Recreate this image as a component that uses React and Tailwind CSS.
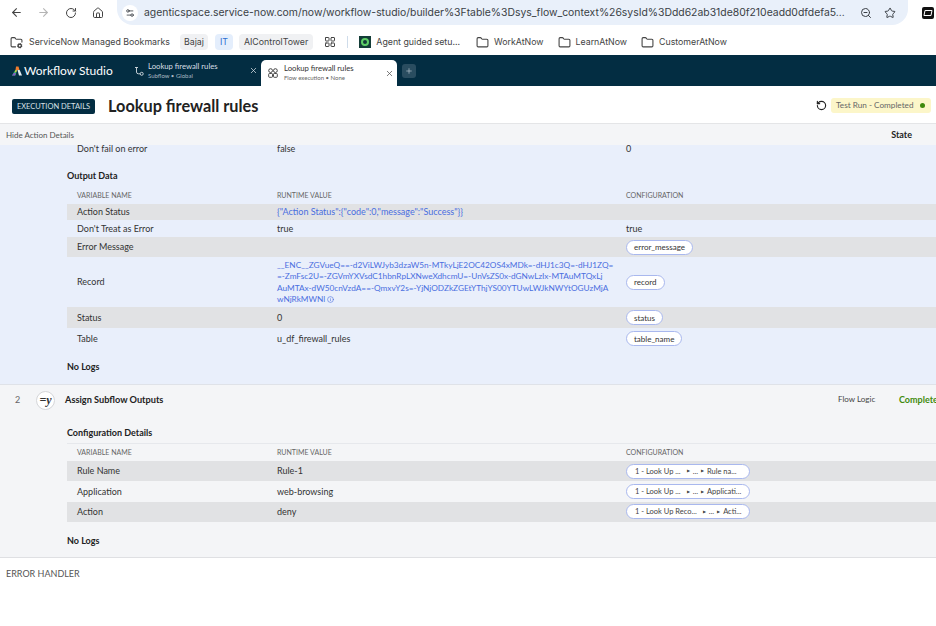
import React from 'react';
import { ArrowLeft, ArrowRight, RotateCw, Home, ZoomOut, Star, FolderCog, LayoutGrid, Folder, X, Plus, Settings2, Info } from 'lucide-react';

const BOOKMARK_FOLDERS = [
  { name: 'WorkAtNow', ml: 'ml-[16px]' },
  { name: 'LearnAtNow', ml: 'ml-[14px]' },
  { name: 'CustomerAtNow', ml: 'ml-[14px]' },
];

const OUTPUT_ROWS = [
  { name: 'Action Status', h: 'h-[16px]', value: '{"Action Status":{"code":0,"message":"Success"}}', link: true, shaded: true },
  { name: "Don't Treat as Error", h: 'h-[17px]', value: 'true', text: 'true' },
  { name: 'Error Message', h: 'h-[20px]', pill: 'error_message', shaded: true },
  { name: 'Record', h: 'h-[50px]', record: true, pill: 'record' },
  { name: 'Status', h: 'h-[21px]', value: '0', pill: 'status', shaded: true },
  { name: 'Table', h: 'h-[21px]', value: 'u_df_firewall_rules', pill: 'table_name' },
];

const RECORD_LINES = [
  '__ENC__ZGVueQ==-d2ViLWJyb3dzaW5n-MTkyLjE2OC42OS4xMDk=-dHJ1c3Q=-dHJ1ZQ=',
  '=-ZmFsc2U=-ZGVmYXVsdC1hbnRpLXNweXdhcmU=-UnVsZS0x-dGNwLzIx-MTAuMTQxLj',
  'AuMTAx-dW50cnVzdA==-QmxvY2s=-YjNjODZkZGEtYThjYS00YTUwLWJkNWYtOGUzMjA',
];

const CONFIG_ROWS = [
  { name: 'Rule Name', value: 'Rule-1', parts: ['1 - Look Up ...', '...', 'Rule na...'], shaded: true },
  { name: 'Application', value: 'web-browsing', parts: ['1 - Look Up ...', '...', 'Applicati...'] },
  { name: 'Action', value: 'deny', parts: ['1 - Look Up Reco...', '...', 'Acti...'], shaded: true },
];

function Pill({ children }) {
  return (
    <span className="inline-flex h-[15px] items-center rounded-full border border-[#a9b8ee] bg-white px-[7px] text-[8px] text-[#333]">
      {children}
    </span>
  );
}

function RefPill({ parts }) {
  return (
    <span className="inline-flex h-[15px] w-[124px] items-center gap-[3px] rounded-full border border-[#a9b8ee] bg-white pl-[8px] text-[7.5px] whitespace-nowrap text-[#444]">
      <span>{parts[0]}</span>
      <span className="ml-[3px] text-[4px]">▶</span>
      <span>{parts[1]}</span>
      <span className="text-[4px]">▶</span>
      <span>{parts[2]}</span>
    </span>
  );
}

function HeaderRow({ border }) {
  return (
    <div className={`flex items-center text-[7px] text-[#666] ${border ? 'h-[18px] border-t border-[#e6e8ec] pb-[1px]' : 'h-[17px]'}`}>
      <div className="w-[210px] pl-[10px]">VARIABLE NAME</div>
      <div className="w-[349px]">RUNTIME VALUE</div>
      <div>CONFIGURATION</div>
    </div>
  );
}

function OutputRow({ row }) {
  return (
    <div className={`flex items-center text-[9px] text-[#333] ${row.h} ${row.shaded ? 'bg-[#e1e2e4]' : ''}`}>
      <div className="w-[210px] pl-[10px]">{row.name}</div>
      <div className={`w-[349px] ${row.link ? 'text-[#4a6ee0]' : ''}`}>
        {row.record ? (
          <div className="pt-[1px] text-[8.25px] leading-[11.5px] whitespace-nowrap text-[#4a6ee0]">
            {RECORD_LINES.map((line) => (
              <div key={line}>{line}</div>
            ))}
            <div>
              wNjRkMWNl
              <Info size={7} className="ml-[2px] inline align-[-1px]" />
            </div>
          </div>
        ) : (
          row.value
        )}
      </div>
      <div>{row.pill ? <Pill>{row.pill}</Pill> : row.text}</div>
    </div>
  );
}

function Section({ title, children }) {
  return (
    <div>
      <div className="text-[9px] leading-[12px] font-bold text-[#222]">{title}</div>
      {children}
    </div>
  );
}

export default function App() {
  return (
    <div className="flex h-[626px] w-[936px] flex-col overflow-hidden bg-white font-['Lato',sans-serif]">
      {/* Browser toolbar */}
      <div className="flex h-[25px] shrink-0 items-center font-['Inter',sans-serif] text-[#444]">
        <div className="flex w-[117px] items-center pl-[10px]">
          <ArrowLeft size={13} />
          <ArrowRight size={13} className="ml-[14px] text-[#b5b5b5]" />
          <RotateCw size={12} className="ml-[15px]" />
          <Home size={12} className="ml-[15px]" />
        </div>
        <div className="flex h-[25px] w-[791px] items-center rounded-b-[16px] bg-[#e9f0fa] pr-[12px] pl-[5px] text-[10.4px] whitespace-nowrap text-[#3a3f45]">
          <span className="flex h-[16px] w-[16px] items-center justify-center rounded-full bg-white">
            <Settings2 size={10} />
          </span>
          <span className="ml-[6px] flex-1">agenticspace.service-now.com/now/workflow-studio/builder%3Ftable%3Dsys_flow_context%26sysId%3Ddd62ab31de80f210eadd0dfdefa5...</span>
          <ZoomOut size={12} />
          <Star size={12} className="ml-[12px]" />
        </div>
        <div className="ml-[14px] flex h-[12px] w-[12px] items-center justify-center rounded-[2px] bg-[#111]">
          <div className="h-[6px] w-[8px] -skew-x-12 rounded-[1px] border border-white" />
        </div>
      </div>

      {/* Bookmarks */}
      <div className="flex h-[30px] shrink-0 items-center pt-[4px] pl-[10px] font-['Inter',sans-serif] text-[8.8px] whitespace-nowrap text-[#444]">
        <FolderCog size={13} />
        <span className="ml-[6px]">ServiceNow Managed Bookmarks</span>
        <span className="ml-[10px] rounded-[4px] bg-[#f0f1f3] px-[4px] py-[1px]">Bajaj</span>
        <span className="ml-[7px] rounded-[4px] bg-[#e4eefc] px-[5px] py-[1px] text-[#2f6fd0]">IT</span>
        <span className="ml-[6px] rounded-[4px] bg-[#f0f1f3] px-[5px] py-[1px]">AIControlTower</span>
        <LayoutGrid size={12} className="ml-[11px]" />
        <div className="ml-[11px] h-[12px] w-px bg-[#cfdcea]" />
        <div className="ml-[11px] flex h-[12px] w-[12px] items-center justify-center bg-[#143d38]">
          <div className="h-[8px] w-[8px] rounded-full border-2 border-[#5fd068]" />
        </div>
        <span className="ml-[5px]">Agent guided setu...</span>
        {BOOKMARK_FOLDERS.map((b) => (
          <span key={b.name} className={`flex items-center gap-[5px] ${b.ml}`}>
            <Folder size={13} />
            {b.name}
          </span>
        ))}
      </div>

      {/* Studio tab bar */}
      <div className="flex h-[31px] shrink-0 items-end bg-[#032d42] text-white">
        <div className="flex h-full w-[128px] items-center pl-[11px]">
          <svg width="12" height="12" viewBox="0 0 12 12">
            <path d="M5 1.5 L7.5 1.5 L8.5 5 L4.5 5 Z" fill="#ef7d2e" />
            <path d="M4.2 5 L6 5 L4.5 10.5 L1 10.5 Z" fill="#3fb56b" />
            <path d="M3 8 L4.6 8 L4 10.5 L1 10.5 Z" fill="#8a4fd0" />
            <path d="M6.5 5 L8.7 5 L11 10.5 L8 10.5 Z" fill="#e8eef2" />
            <path d="M4.6 5 L5.8 5 L5.3 7 L4 7 Z" fill="#f2c832" />
          </svg>
          <span className="ml-[1px] text-[12px] whitespace-nowrap">Workflow Studio</span>
        </div>
        <div className="flex h-full w-[133px] items-center text-[#d7dfe4]">
          <svg width="10" height="10" viewBox="0 0 10 10" fill="none" stroke="currentColor" strokeWidth="0.9" className="ml-[6px]">
            <path d="M1 1.5 H4 M2.5 1.5 V6 Q2.5 7.8 4.5 7.8 H6" />
            <circle cx="7.7" cy="7.8" r="1.5" />
          </svg>
          <div className="ml-[4px] w-[101px] text-[7.7px] leading-[9px]">
            <div className="whitespace-nowrap">Lookup firewall rules</div>
            <div className="text-[6px] whitespace-nowrap text-[#a8b8c2]">Subflow • Global</div>
          </div>
          <X size={9} />
        </div>
        <div className="flex h-[26px] w-[136px] items-center rounded-t-[5px] bg-white text-[#333]">
          <svg width="10" height="10" viewBox="0 0 10 10" fill="none" stroke="currentColor" strokeWidth="0.9" className="ml-[7px]">
            <circle cx="2.6" cy="2.6" r="1.9" />
            <circle cx="7.4" cy="2.6" r="1.9" />
            <rect x="0.7" y="5.5" width="3.8" height="3.8" rx="0.8" />
            <rect x="5.5" y="5.5" width="3.8" height="3.8" rx="0.8" />
          </svg>
          <div className="ml-[6px] w-[101px] text-[7.7px] leading-[9px]">
            <div className="whitespace-nowrap">Lookup firewall rules</div>
            <div className="text-[6px] whitespace-nowrap text-[#666]">Flow execution • None</div>
          </div>
          <X size={9} className="text-[#555]" />
        </div>
        <div className="mb-[8px] ml-[5px] flex h-[14px] w-[14px] items-center justify-center rounded-[3px] bg-[#2a4d60]">
          <Plus size={8} className="text-[#b8c6ce]" />
        </div>
      </div>

      {/* Page header */}
      <div className="flex h-[38px] shrink-0 items-center border-b border-[#e4e5e7] pt-[4px] pr-[5px] pl-[12px]">
        <span className="flex h-[15px] w-[83px] items-center justify-center rounded-[2px] bg-[#032d42] text-[7.5px] whitespace-nowrap text-[#d9e2e7]">EXECUTION DETAILS</span>
        <h1 className="ml-[13px] flex-1 text-[16.3px] font-bold text-[#222]">Lookup firewall rules</h1>
        <div className="-mt-[3px] flex items-center">
          <RotateCw size={11} strokeWidth={2.5} className="mr-[4px] -scale-x-100 text-[#222]" />
          <div className="flex h-[15px] w-[100px] items-center rounded-[3px] bg-[#fcf6c9] pl-[5px] text-[8.2px] text-[#666]">
            <span className="flex-1">Test Run - Completed</span>
            <span className="mr-[6px] h-[5px] w-[5px] rounded-full bg-[#3f8a0c]" />
          </div>
        </div>
      </div>

      {/* Action column header */}
      <div className="flex h-[21px] shrink-0 items-center justify-between bg-[#f4f5f7] pr-[24px] pl-[6px] text-[8px] text-[#555]">
        <span>Hide Action Details</span>
        <span className="pt-[1px] text-[9px] font-bold text-[#222]">State</span>
      </div>

      {/* Step 1, expanded and scrolled */}
      <div className="flex h-[240px] shrink-0 flex-col border-b border-[#dfe2e8] bg-[#e9effb] pl-[67px]">
        <div className="flex h-[12px] items-start text-[9px] leading-[8px] text-[#333]">
          <div className="w-[210px] pl-[10px]">Don't fail on error</div>
          <div className="w-[349px]">false</div>
          <div>0</div>
        </div>
        <div className="mt-[12.5px]">
          <Section title="Output Data">
            <div className="mt-[5.5px]">
              <HeaderRow />
              {OUTPUT_ROWS.map((row) => (
                <OutputRow key={row.name} row={row} />
              ))}
            </div>
          </Section>
        </div>
        <div className="mt-[12px] text-[9px] leading-[12px] font-bold text-[#222]">No Logs</div>
      </div>

      {/* Step 2 */}
      <div className="flex h-[173px] shrink-0 flex-col border-b border-[#dfe0e3] bg-[#f4f5f7]">
        <div className="relative flex h-[30px] items-center whitespace-nowrap">
          <span className="w-[36px] pl-[15px] text-[9px] text-[#666]">2</span>
          <span className="flex h-[19px] w-[19px] shrink-0 items-center justify-center rounded-full border border-[#d5d6d9] bg-white font-['Liberation_Serif',serif] text-[12px] leading-none font-bold text-[#333] italic">=y</span>
          <span className="ml-[10px] text-[9.2px] font-bold text-[#222]">Assign Subflow Outputs</span>
          <span className="absolute top-[9px] left-[838px] text-[8px] leading-[10px] text-[#444]">Flow Logic</span>
          <span className="absolute top-[9px] left-[899px] text-[9px] leading-[11px] font-bold text-[#3f8a0c]">Completed</span>
        </div>
        <div className="mt-[12px] pl-[67px]">
          <Section title="Configuration Details">
            <div className="mt-[4px]">
              <HeaderRow border />
              {CONFIG_ROWS.map((row) => (
                <div key={row.name} className={`flex h-[20.4px] items-center text-[9px] text-[#333] ${row.shaded ? 'bg-[#e1e2e4]' : ''}`}>
                  <div className="w-[210px] pl-[10px]">{row.name}</div>
                  <div className="w-[349px]">{row.value}</div>
                  <RefPill parts={row.parts} />
                </div>
              ))}
            </div>
          </Section>
          <div className="mt-[13px] text-[9px] leading-[12px] font-bold text-[#222]">No Logs</div>
        </div>
      </div>

      <div className="pt-[9px] pl-[6px] text-[9px] text-[#555]">ERROR HANDLER</div>
    </div>
  );
}
